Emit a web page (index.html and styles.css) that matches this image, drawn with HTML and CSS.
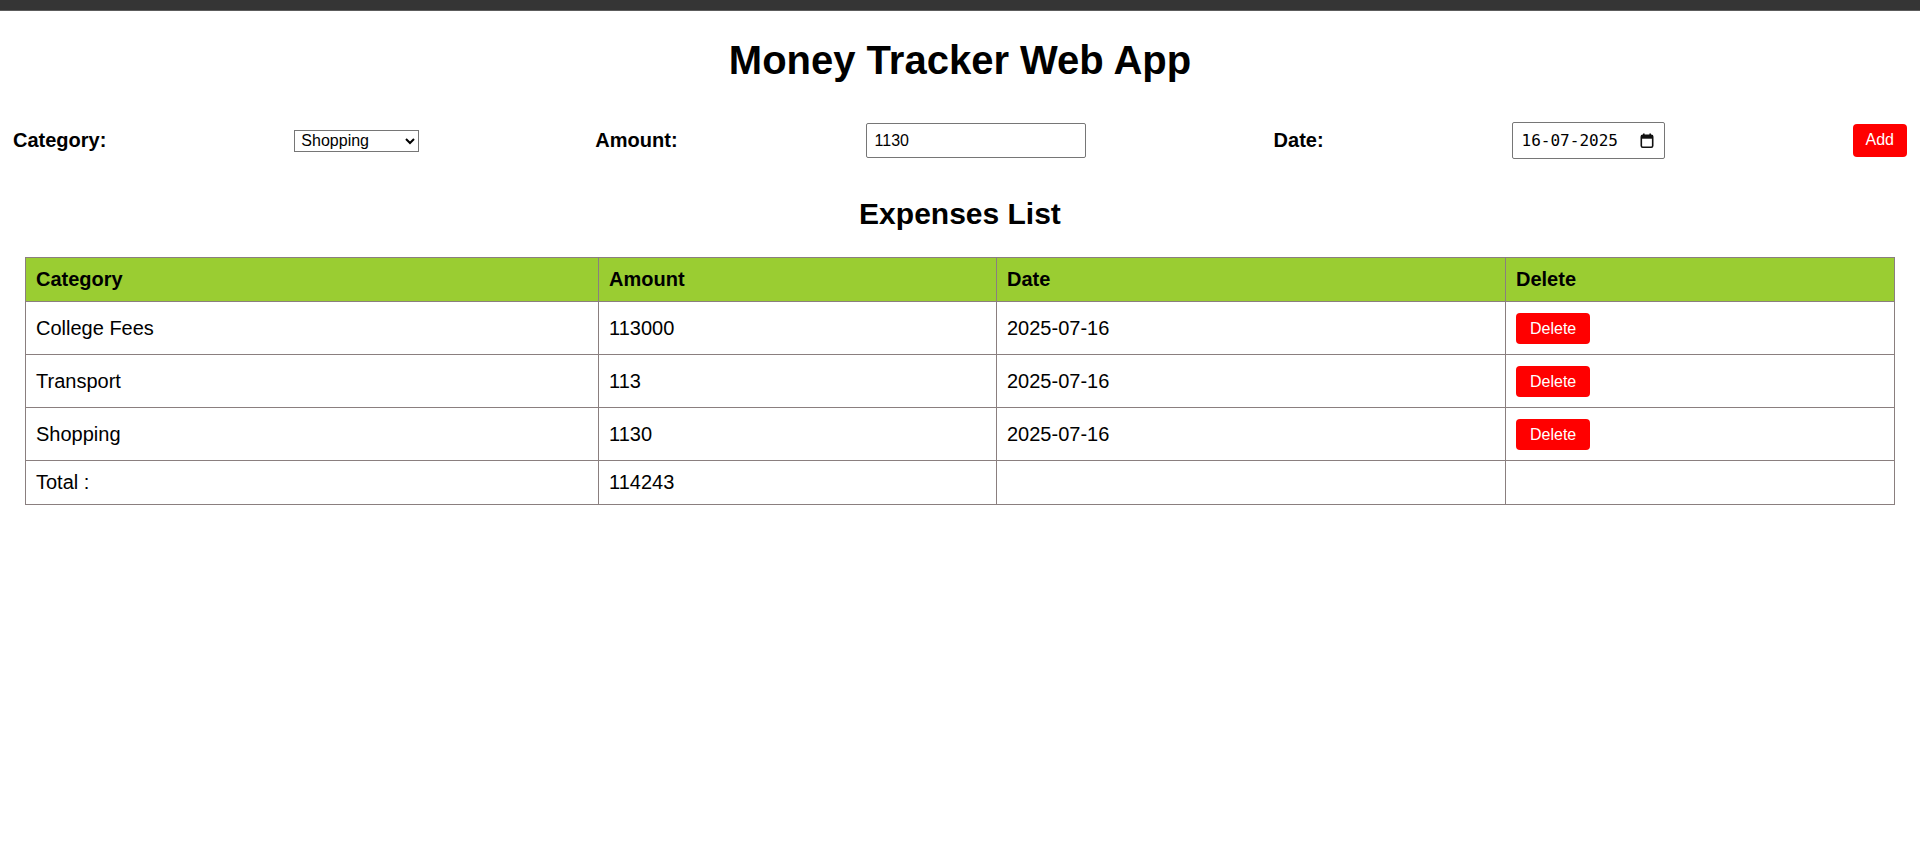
FILE: index.html
```html
<!DOCTYPE html>
<html lang="en">
<head>
<meta charset="UTF-8">
<title>Money Tracker Web App</title>
<link rel="stylesheet" href="styles.css">
</head>
<body>
<div class="topbar"></div>
<h1 class="title">Money Tracker Web App</h1>
<form class="entry-form">
  <label class="field-label" for="category">Category:</label>
  <select id="category" class="category-select">
    <option>Select</option>
    <option>Food &amp; Beverage</option>
    <option>Rent</option>
    <option>Transport</option>
    <option>Relaxing</option>
    <option selected>Shopping</option>
    <option>College Fees</option>
  </select>
  <label class="field-label" for="amount">Amount:</label>
  <input id="amount" class="amount-input" type="number" value="1130">
  <label class="field-label" for="date">Date:</label>
  <div class="date-field">
    <input id="date" class="date-text" type="text" value="16-07-2025">
    <svg class="cal-icon" width="14" height="15" viewBox="0 0 14 15" aria-hidden="true">
      <rect x="3" y="0.5" width="1.6" height="2.5" fill="#111"/>
      <rect x="9.4" y="0.5" width="1.6" height="2.5" fill="#111"/>
      <rect x="1.3" y="2.3" width="11.4" height="11.9" rx="1.4" fill="none" stroke="#111" stroke-width="1.6"/>
      <rect x="1.3" y="2.3" width="11.4" height="3.4" fill="#111"/>
    </svg>
  </div>
  <button type="button" class="btn btn-add">Add</button>
</form>
<h2 class="list-title">Expenses List</h2>
<div class="table-wrap">
  <table class="expenses">
    <colgroup>
      <col class="col-cat">
      <col class="col-amt">
      <col class="col-date">
      <col class="col-del">
    </colgroup>
    <thead>
      <tr>
        <th>Category</th>
        <th>Amount</th>
        <th>Date</th>
        <th>Delete</th>
      </tr>
    </thead>
    <tbody>
      <tr>
        <td>College Fees</td>
        <td>113000</td>
        <td>2025-07-16</td>
        <td><button type="button" class="btn btn-delete">Delete</button></td>
      </tr>
      <tr>
        <td>Transport</td>
        <td>113</td>
        <td>2025-07-16</td>
        <td><button type="button" class="btn btn-delete">Delete</button></td>
      </tr>
      <tr>
        <td>Shopping</td>
        <td>1130</td>
        <td>2025-07-16</td>
        <td><button type="button" class="btn btn-delete">Delete</button></td>
      </tr>
    </tbody>
    <tfoot>
      <tr>
        <td>Total :</td>
        <td>114243</td>
        <td></td>
        <td></td>
      </tr>
    </tfoot>
  </table>
</div>
</body>
</html>
```
FILE: styles.css
```css
html, body {
  margin: 0;
  padding: 0;
  background: #ffffff;
}

body {
  font-family: "Liberation Sans", Arial, sans-serif;
  color: #000;
}

.topbar {
  height: 10px;
  background: #353535;
  border-bottom: 1px solid #5c5c5c;
}

.title {
  margin: 26px 0 39px;
  font-size: 40px;
  font-weight: bold;
  text-align: center;
  line-height: 46px;
}

.entry-form {
  display: flex;
  align-items: center;
  gap: 188px;
  padding: 0 13px;
  margin: 0 0 37px;
}

.field-label {
  font-size: 20px;
  font-weight: bold;
}

.category-select {
  box-sizing: border-box;
  width: 125px;
  height: 22px;
  margin-right: -12px;
  font-family: "Liberation Sans", Arial, sans-serif;
  font-size: 16px;
  border: 1px solid #767676;
  border-radius: 0;
  background: #fff;
  color: #000;
  padding: 0 0 0 2px;
}

.amount-input {
  box-sizing: border-box;
  width: 220px;
  height: 35px;
  padding: 0 8px;
  font-family: "Liberation Sans", Arial, sans-serif;
  font-size: 16px;
  border: 1px solid #767676;
  border-radius: 2px;
  color: #000;
  -moz-appearance: textfield;
}

.amount-input::-webkit-outer-spin-button,
.amount-input::-webkit-inner-spin-button {
  -webkit-appearance: none;
  margin: 0;
}

.date-field {
  box-sizing: border-box;
  width: 155px;
  height: 37px;
  display: flex;
  align-items: center;
  justify-content: space-between;
  padding: 0 10px 0 9px;
  border: 1px solid #767676;
  border-radius: 2px;
  background: #fff;
}

.date-text {
  width: 100px;
  padding: 0;
  margin: 0;
  border: none;
  outline: none;
  background: transparent;
  font-family: "DejaVu Sans Mono", "Liberation Mono", monospace;
  font-size: 16px;
  color: #000;
}

.cal-icon {
  display: block;
  flex: none;
}

.btn {
  font-family: "Liberation Sans", Arial, sans-serif;
  font-size: 16px;
  line-height: 18px;
  color: #fff;
  background: #ff0000;
  border: none;
  border-radius: 4px;
  cursor: pointer;
}

.btn-add {
  padding: 7px 13px 8px;
}

.btn-delete {
  padding: 7px 14px 6px;
}

.list-title {
  margin: 0 0 26px;
  font-size: 30px;
  font-weight: bold;
  text-align: center;
  line-height: 35px;
}

.table-wrap {
  padding: 0 26px 0 25px;
}

.expenses {
  width: 100%;
  table-layout: fixed;
  border-collapse: collapse;
  font-size: 20px;
}

.col-cat { width: 573px; }
.col-amt { width: 398px; }
.col-date { width: 509px; }
.col-del { width: 389px; }

.expenses th,
.expenses td {
  border: 1px solid #8a7f7f;
  padding: 10px;
  text-align: left;
  line-height: 23px;
}

.expenses th {
  background: #9acd32;
  font-weight: bold;
}

.expenses td {
  font-weight: normal;
}

.expenses tbody td {
  height: 32px;
}
```
